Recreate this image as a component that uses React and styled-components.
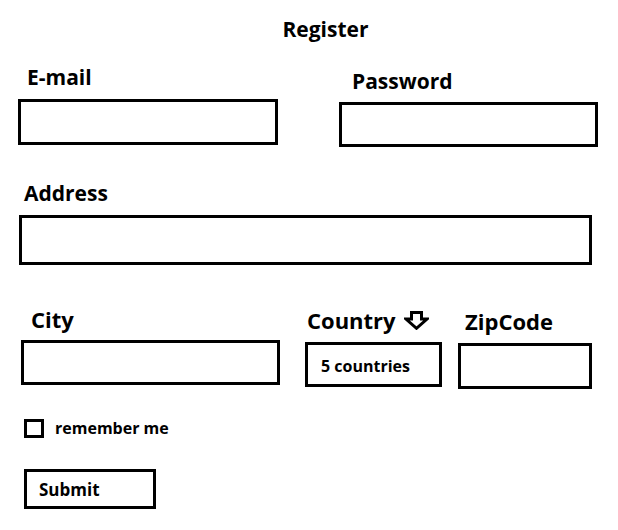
import styled, { createGlobalStyle } from 'styled-components';

const GlobalStyle = createGlobalStyle`
  body {
    margin: 0;
    background: #fff;
    color: #000;
    font-family: "Open Sans", "Noto Sans", sans-serif;
    font-weight: 700;
  }
`;

const DownArrow = () => (
  <svg width="25" height="19" viewBox="0 0 25 19">
    <path
      d="M7.5 1.5 H17.5 V8 H23 L12.5 17.3 L2 8 H7.5 Z"
      fill="none"
      stroke="#000"
      strokeWidth="3"
      strokeLinejoin="miter"
    />
  </svg>
);

const App = () => {
  return (
    <>
      <GlobalStyle />
      <Form onSubmit={(e) => e.preventDefault()}>
        <Title>Register</Title>

        <Row $top={24} $left={18}>
          <Field $w={260}>
            <Label $indent={9} $gap={10}>E-mail</Label>
            <TextInput $h={46} type="email" />
          </Field>
          <Field $w={259} $ml={61} $dy={4}>
            <Label $indent={13} $gap={9}>Password</Label>
            <TextInput $h={45} type="password" />
          </Field>
        </Row>

        <Row $top={34} $left={19}>
          <Field $w={573}>
            <Label $indent={5} $gap={10}>Address</Label>
            <TextInput $h={50} />
          </Field>
        </Row>

        <Row $top={42} $left={21}>
          <Field $w={259}>
            <Label $indent={10} $gap={9} $size={22}>City</Label>
            <TextInput $h={45} />
          </Field>
          <Field $w={137} $ml={25} $dy={1}>
            <Label $indent={2} $gap={10} $size={22}>
              Country <DownArrow />
            </Label>
            <SelectBox $h={45}>5 countries</SelectBox>
          </Field>
          <Field $w={134} $ml={16} $dy={2}>
            <Label $indent={7} $gap={10} $size={22}>ZipCode</Label>
            <TextInput $h={46} />
          </Field>
        </Row>

        <CheckRow>
          <Check type="checkbox" />
          <CheckText>remember me</CheckText>
        </CheckRow>

        <SubmitButton type="submit">Submit</SubmitButton>
      </Form>
    </>
  );
};

export default App;

const Form = styled.form`
  width: 618px;
  height: 530px;
  box-sizing: border-box;
  padding-top: 17px;
`;

const Title = styled.h1`
  margin: 0;
  padding-left: 33px;
  font-size: 21px;
  line-height: 24px;
  font-weight: 700;
  text-align: center;
`;

const Row = styled.div`
  display: flex;
  align-items: flex-start;
  margin-top: ${({ $top }) => $top}px;
  padding-left: ${({ $left }) => $left}px;
`;

const Field = styled.div`
  display: flex;
  flex-direction: column;
  width: ${({ $w }) => $w}px;
  margin-left: ${({ $ml }) => $ml || 0}px;
  margin-top: ${({ $dy }) => $dy || 0}px;
`;

// label above a box; the gap prop is the space down to the box
const Label = styled.label`
  display: flex;
  align-items: center;
  gap: 8px;
  height: 24px;
  padding-left: ${({ $indent }) => $indent}px;
  margin-bottom: ${({ $gap }) => $gap}px;
  font-size: ${({ $size }) => $size || 21}px;
  line-height: 24px;
  white-space: nowrap;
`;

const TextInput = styled.input`
  display: block;
  width: 100%;
  height: ${({ $h }) => $h}px;
  box-sizing: border-box;
  margin: 0;
  padding: 0 10px;
  border: 3px solid #000;
  border-radius: 0;
  background: #fff;
  font: inherit;
  outline: none;
`;

const SelectBox = styled.div`
  display: flex;
  align-items: center;
  height: ${({ $h }) => $h}px;
  box-sizing: border-box;
  padding: 2px 0 0 13px;
  border: 3px solid #000;
  font-size: 16px;
`;

const CheckRow = styled.label`
  display: flex;
  align-items: center;
  gap: 11px;
  margin-top: 30px;
  padding-left: 24px;
`;

const Check = styled.input`
  appearance: none;
  width: 20px;
  height: 19px;
  margin: 0;
  box-sizing: border-box;
  border: 3px solid #000;
  border-radius: 0;
  background: #fff;
`;

const CheckText = styled.span`
  font-size: 16px;
  line-height: 19px;
`;

const SubmitButton = styled.button`
  display: block;
  width: 132px;
  height: 40px;
  margin: 31px 0 0 24px;
  padding: 0 0 0 12px;
  box-sizing: border-box;
  border: 3px solid #000;
  border-radius: 0;
  background: #fff;
  color: #000;
  font-family: inherit;
  font-weight: 700;
  font-size: 17px;
  text-align: left;
`;
